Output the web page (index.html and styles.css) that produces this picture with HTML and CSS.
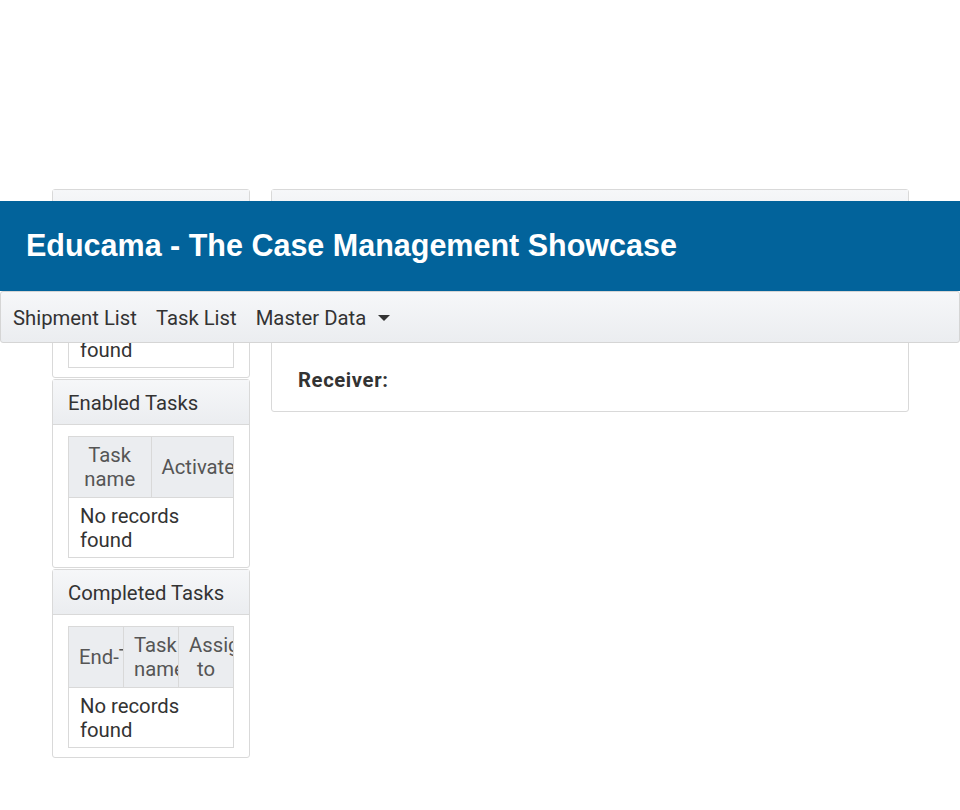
FILE: index.html
```html
<!DOCTYPE html>
<html>
<head>
<meta charset="utf-8">
<link rel="stylesheet" href="styles.css">
</head>
<body>
<div class="page">
  <aside class="side">
    <section class="card">
      <div class="card-head">Possible Tasks</div>
      <div class="card-body">
        <table class="tbl cols2">
          <thead><tr><th>Task name</th><th>Start</th></tr></thead>
          <tbody><tr><td colspan="2">No records found</td></tr></tbody>
        </table>
      </div>
    </section>
    <section class="card">
      <div class="card-head">Enabled Tasks</div>
      <div class="card-body">
        <table class="tbl cols2">
          <thead><tr><th>Task name</th><th>Activate</th></tr></thead>
          <tbody><tr><td colspan="2">No records found</td></tr></tbody>
        </table>
      </div>
    </section>
    <section class="card">
      <div class="card-head">Completed Tasks</div>
      <div class="card-body">
        <table class="tbl cols3">
          <thead><tr><th><span class="nowrap">End-Time</span></th><th>Task name</th><th>Assigned to</th></tr></thead>
          <tbody><tr><td colspan="3">No records found</td></tr></tbody>
        </table>
      </div>
    </section>
  </aside>
  <main class="card main-card">
    <div class="card-head">Shipment Details</div>
    <div class="main-body">
      <div class="field">Customer:</div>
      <div class="field">Sender:</div>
      <div class="field">Receiver:</div>
    </div>
  </main>
</div>

<header class="topbar">
  <div class="brand">Educama - The Case Management Showcase</div>
  <nav class="menubar">
    <a class="menu-item">Shipment List</a>
    <a class="menu-item">Task List</a>
    <a class="menu-item">Master Data <span class="caret"></span></a>
  </nav>
</header>
</body>
</html>
```
FILE: styles.css
```css
html, body {
  margin: 0;
  padding: 0;
  background: #ffffff;
}
body {
  font-family: Roboto, "Liberation Sans", sans-serif;
  font-size: 20.3px;
  line-height: 24px;
  color: #333333;
  width: 960px;
  height: 810px;
  overflow: hidden;
  position: relative;
}
.page {
  display: flex;
  align-items: flex-start;
  gap: 21px;
  padding: 189px 0 0 52px;
}
.side {
  width: 198px;
  display: flex;
  flex-direction: column;
  gap: 1px;
}
.card {
  box-sizing: border-box;
  border: 1px solid #d9d9d9;
  border-radius: 3px;
  background: #ffffff;
}
.side .card { height: 189px; }
.card-head {
  height: 45px;
  box-sizing: border-box;
  padding: 11px 15px 10px;
  border-bottom: 1px solid #d9d9d9;
  background: linear-gradient(#f6f7f9, #ebedf0);
  color: #333333;
  white-space: nowrap;
  overflow: hidden;
}
.card-body {
  padding: 11px 15px 9px;
}
.tbl {
  width: 100%;
  table-layout: fixed;
  border-collapse: collapse;
  border: 1px solid #d9d9d9;
}
.tbl th {
  height: 60px;
  box-sizing: border-box;
  padding: 6px 10px;
  background: #ebedf0;
  color: #555555;
  font-weight: normal;
  text-align: center;
  border: 1px solid #d9d9d9;
  overflow: hidden;
}
.nowrap { white-space: nowrap; }
.tbl td {
  height: 59px;
  box-sizing: border-box;
  padding: 6px 11px 5px;
  text-align: left;
  border: 1px solid #d9d9d9;
}
.main-card {
  width: 638px;
}
.main-body {
  padding: 33px 26px 19px;
}
.field {
  font-weight: bold;
  height: 24px;
  margin-bottom: 26px;
  letter-spacing: 0.6px;
}
.field:last-child { margin-bottom: 0; }

.topbar {
  position: absolute;
  top: 201px;
  left: 0;
  width: 960px;
}
.brand {
  height: 90px;
  box-sizing: border-box;
  background: #02639b;
  color: #ffffff;
  font-family: "Liberation Sans", Arial, sans-serif;
  font-weight: bold;
  font-size: 30.5px;
  line-height: 88px;
  padding-left: 26px;
}
.menubar {
  height: 52px;
  box-sizing: border-box;
  border: 1px solid #d5d5d5;
  border-radius: 3px;
  background: linear-gradient(#f6f7f9, #ebedf0);
  display: flex;
  align-items: center;
  gap: 19px;
  padding: 2px 0 0 12px;
}
.menu-item {
  color: #333333;
  text-decoration: none;
  display: flex;
  align-items: center;
}
.caret {
  display: inline-block;
  width: 0;
  height: 0;
  margin-left: 12px;
  border-left: 6px solid transparent;
  border-right: 6px solid transparent;
  border-top: 6px solid #333333;
}
```
